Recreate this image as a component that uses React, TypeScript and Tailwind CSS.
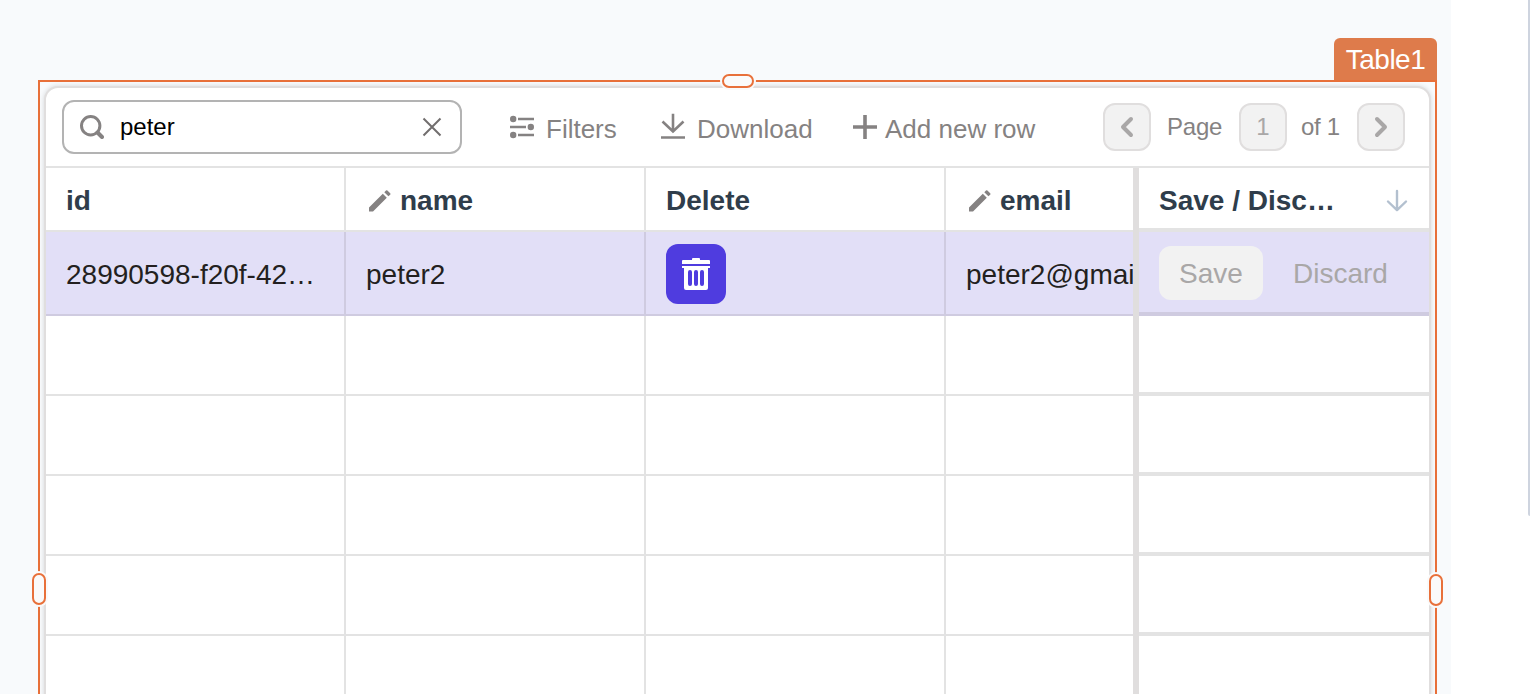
import type { ReactNode } from "react";

const emptyRows = [1, 2, 3, 4, 5];

function PencilIcon() {
  return (
    <svg className="h-6 w-6 shrink-0" viewBox="0 0 24 24" fill="#858282">
      <path d="M1 19 14.800 5.200 18.800 9.200 5 23H1ZM16.300 3.700 18 2a1 1 0 0 1 1.400 0L22.200 4.800a1 1 0 0 1 0 1.400L20.400 7.800Z" transform="translate(0 -0.500)" />
    </svg>
  );
}

function ActionIcon({ children }: { children: ReactNode }) {
  return (
    <svg className="h-7 w-6 shrink-0" viewBox="0 0 24 28" fill="none" stroke="#858282">
      {children}
    </svg>
  );
}

function Row({
  height,
  line,
  tone = "",
  offset = "",
  pinnedOffset = "",
  cells,
  pinned,
}: {
  height: string;
  line: string;
  tone?: string;
  offset?: string;
  pinnedOffset?: string;
  cells: ReactNode[];
  pinned?: ReactNode;
}) {
  return (
    <div className={`flex shrink-0 ${height} ${tone}`}>
      {cells.map((cell, i) => (
        <div
          key={i}
          className={`flex shrink-0 items-center overflow-hidden whitespace-nowrap border-b-2 pl-5 ${offset} ${line} ${
            i === 3 ? "w-[187px]" : "w-[300px] border-r-2"
          }`}
        >
          {cell}
        </div>
      ))}
      <div className="flex w-[296px] shrink-0 border-l-[6px] border-[#e0dede]">
        <div className={`flex w-full items-center whitespace-nowrap border-b-4 pl-5 ${pinnedOffset} ${line}`}>
          {pinned}
        </div>
      </div>
    </div>
  );
}

function PageButton({ children }: { children: ReactNode }) {
  return (
    <div className="flex h-12 w-12 items-center justify-center rounded-xl border-2 border-[#e0dede] bg-[#f2f2f2] text-2xl text-[#a9a7a7]">
      {children}
    </div>
  );
}

function Handle({ className, shape }: { className: string; shape: string }) {
  return (
    <div className={`absolute rounded-[9px] bg-[#fafafa] p-0.5 ${className}`}>
      <div className={`border-2 border-[#e8703a] bg-[#fafafa] ${shape}`} />
    </div>
  );
}

export default function App() {
  const title = "text-[28px] font-bold text-[#2f3d4b]";
  const value = "text-[28px] text-[#231f20]";
  return (
    <div className="flex h-[694px] w-[1530px] overflow-hidden bg-white font-['Liberation_Sans',Arial,sans-serif] leading-none">
      <main className="h-full w-[1451px] shrink-0 bg-[#f8fafc] pl-[38px] pt-[38px]">
        <div className="flex w-[1399px] justify-end">
          <div className="flex h-[42px] w-[103px] items-center justify-center rounded-t-md bg-[#de7b4b] pt-0.5 text-[28px] tracking-[-0.5px] text-white">
            Table1
          </div>
        </div>

        <section className="relative h-[700px] w-[1399px] border-2 border-[#e8703a] p-1">
          <div className="flex h-[720px] w-[1387px] flex-col overflow-hidden rounded-t-[14px] border-2 border-[#e0dede] bg-white shadow-[0_0_5px_rgba(0,0,0,0.14)]">
            <div className="flex h-20 shrink-0 border-b-2 border-[#e3e3e3] pl-4 pt-3">
              <div className="flex h-[54px] w-[400px] items-center rounded-xl border-2 border-[#b3b3b3] pl-4 pr-[18px] text-2xl text-black">
                <svg className="h-6 w-6" viewBox="0 0 24 24" fill="none" stroke="#858282">
                  <circle cx="10.700" cy="10.700" r="9.200" strokeWidth="3" />
                  <path d="m17.500 17.500 4.500 4.500" strokeWidth="4" strokeLinecap="round" />
                </svg>
                <span className="ml-4 grow">peter</span>
                <svg className="h-5 w-5" viewBox="0 0 20 20" fill="none" stroke="#716e6e" strokeWidth="2">
                  <path d="m1.500 1.500 17 17M18.500 1.500l-17 17" />
                </svg>
              </div>

              <div className="ml-12 flex h-[54px] items-center text-[26px] text-[#858282]">
                <div className="flex w-[150px] items-center">
                  <ActionIcon>
                    <path d="M8 6h16M0 14h16M8 22h16" strokeWidth="2.600" />
                    <g fill="#858282" stroke="none">
                      <circle cx="3.200" cy="6" r="3.200" />
                      <circle cx="20.800" cy="14" r="3.200" />
                      <circle cx="3.200" cy="22" r="3.200" />
                    </g>
                  </ActionIcon>
                  <span className="ml-3 mt-1">Filters</span>
                </div>
                <div className="flex w-[192px] items-center pl-px">
                  <ActionIcon>
                    <path d="M12 0.800v17.200M1.500 8.500 12 18.500l10.500-10" strokeWidth="2.600" />
                    <path d="M0 24.500h24" strokeWidth="2.600" />
                  </ActionIcon>
                  <span className="ml-3 mt-1">Download</span>
                </div>
                <div className="flex items-center pl-px">
                  <ActionIcon>
                    <path d="M12 2v24M0 14h24" strokeWidth="3.600" />
                  </ActionIcon>
                  <span className="ml-2 mt-1">Add new row</span>
                </div>
              </div>

              <div className="ml-auto mr-6 flex h-[54px] items-center text-2xl text-[#858282]">
                <PageButton>
                  <svg className="h-6 w-6" viewBox="0 0 24 24" fill="none" stroke="#a9a7a7" strokeWidth="4" strokeLinecap="round" strokeLinejoin="round">
                    <path d="m16 4-8 8 8 8" />
                  </svg>
                </PageButton>
                <span className="w-[88px] pl-4 tracking-[-0.200px]">Page</span>
                <PageButton>1</PageButton>
                <span className="w-[70px] pl-[14px] tracking-[-0.300px]">of 1</span>
                <PageButton>
                  <svg className="h-6 w-6" viewBox="0 0 24 24" fill="none" stroke="#a9a7a7" strokeWidth="4" strokeLinecap="round" strokeLinejoin="round">
                    <path d="m8 4 8 8-8 8" />
                  </svg>
                </PageButton>
              </div>
            </div>

            <Row
              height="h-16"
              line="border-[#e3e3e3]"
              offset="pt-[3px]"
              pinnedOffset="pt-[5px]"
              cells={[
                <span className={title}>id</span>,
                <div className="flex items-center gap-2 pl-0.5">
                  <PencilIcon />
                  <span className={title}>name</span>
                </div>,
                <span className={title}>Delete</span>,
                <div className="flex items-center gap-2 pl-0.5">
                  <PencilIcon />
                  <span className={title}>email</span>
                </div>,
              ]}
              pinned={
                <>
                  <span className={`${title} w-[225px]`}>Save / Disc…</span>
                  <svg className="h-6 w-6" viewBox="0 0 24 24" fill="none" stroke="#b3c0cf" strokeWidth="2.400" strokeLinecap="round" strokeLinejoin="round">
                    <path d="M13 2v19M4 12.500l9 8.700 9-8.700" />
                  </svg>
                </>
              }
            />
            <Row
              height="h-[84px]"
              tone="bg-[#e2dff7]"
              line="border-[#cfcbe0]"
              offset="pt-0.5"
              pinnedOffset="pt-0.5"
              cells={[
                <span className={`${value} pt-0.5`}>28990598-f20f-42…</span>,
                <span className={`${value} pt-0.5`}>peter2</span>,
                <div className="flex h-[60px] w-[60px] items-center justify-center rounded-xl bg-[#4f3cdf]">
                  <svg className="h-8 w-7" viewBox="0 0 28 32">
                    <path fill="white" d="M10 2V1q0-1 1-1h6q1 0 1 1v1h9q1 0 1 1v3H0V3q0-1 1-1ZM0 8h28v2h-2v20q0 2-2 2H4q-2 0-2-2V10H0Z" />
                    <path stroke="#4f3cdf" strokeWidth="4" strokeLinecap="round" d="M8 14v12M14 14v12M20 14v12" />
                  </svg>
                </div>,
                <span className={`${value} pt-0.5`}>peter2@gmai</span>,
              ]}
              pinned={
                <>
                  <div className="flex h-[54px] w-[104px] items-center justify-center rounded-xl bg-[#f2f2f2] pt-0.5 text-[28px] text-[#a9a7a7]">
                    Save
                  </div>
                  <span className="ml-[30px] pt-0.5 text-[28px] text-[#a9a7a7]">Discard</span>
                </>
              }
            />
            {emptyRows.map((row) => (
              <Row key={row} height="h-20" line="border-[#e3e3e3]" cells={["", "", "", ""]} />
            ))}
          </div>

          <Handle className="left-[680px] top-[-10px]" shape="h-[14px] w-8 rounded-[7px]" />
          <Handle className="left-[-10px] top-[489px]" shape="h-8 w-[14px] rounded-[7px]" />
          <Handle className="left-[1387px] top-[490px]" shape="h-8 w-[14px] rounded-[7px]" />
        </section>
      </main>
      <div className="ml-auto h-[516px] w-0.5 rounded-bl-sm bg-[#ced4df]" />
    </div>
  );
}
